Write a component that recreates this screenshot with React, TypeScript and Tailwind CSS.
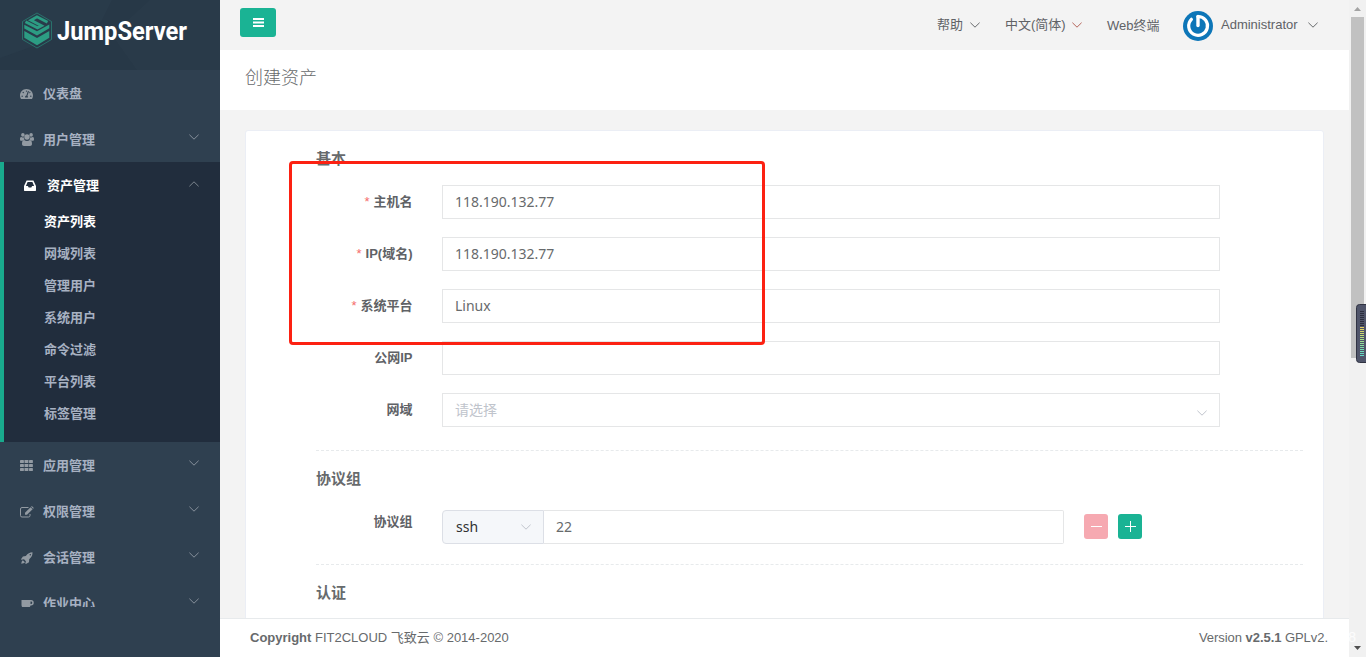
import React from 'react';
import { FaTachometerAlt } from 'react-icons/fa';

interface ChevronProps {
  className?: string;
  up?: boolean;
}

const Chevron: React.FC<ChevronProps> = ({ className = '', up = false }) => (
  <svg className={`h-[6px] w-[10px] shrink-0 ${className}`} viewBox="0 0 10 6" fill="none" stroke="currentColor">
    <path d={up ? 'M0.4 5.3L5 0.8L9.6 5.3' : 'M0.4 0.7L5 5.2L9.6 0.7'} />
  </svg>
);

const UsersIcon: React.FC = () => (
  <svg className="h-[13px] w-[14px]" viewBox="0 0 14 13" fill="currentColor">
    <circle cx="2.900" cy="1.900" r="1.800" />
    <circle cx="11.100" cy="1.900" r="1.800" />
    <circle cx="7" cy="4" r="2.700" />
    <path d="M0 6.200C0 4.800.4 4 1.100 4c.8.4 2 .6 2.700.2 0 1 .2 1.900.8 2.600-.8 0-1.500.3-2 .9H1.300C.5 7.700 0 7.200 0 6.200zM14 6.200C14 4.800 13.600 4 12.900 4c-.8.4-2 .6-2.700.2 0 1-.2 1.900-.8 2.600.8 0 1.500.3 2 .9h1.300c.8 0 1.300-.5 1.300-1.500z" />
    <path d="M2 11c0-2.400.7-3.900 2.200-3.900 1.600 1.200 4 1.200 5.600 0C11.300 7.100 12 8.600 12 11c0 1.200-.8 2-2 2H4c-1.200 0-2-.8-2-2z" />
  </svg>
);

const InboxIcon: React.FC = () => (
  <svg className="h-[11px] w-[12px]" viewBox="0 0 12 11" fill="currentColor" fillRule="evenodd">
    <path d="M2.6 0.5h6.8L12 6v4.3a.6.6 0 0 1-.6.6H.6a.6.6 0 0 1-.6-.6V6zM3.6 2L1.900 6h2l.8 1.600h2.600L8.100 6h2L8.400 2z" />
  </svg>
);

const GridIcon: React.FC = () => (
  <svg className="h-[11px] w-[13px]" viewBox="0 0 13 11" fill="currentColor">
    {[0, 4, 8].map((y) =>
      [0, 4.5, 9].map((x) => <rect key={`${x}-${y}`} x={x} y={y} width="3.9" height="3" rx="0.4" />)
    )}
  </svg>
);

const EditIcon: React.FC = () => (
  <svg className="h-[12px] w-[14px]" viewBox="0 0 14 12" fill="none" stroke="currentColor">
    <path d="M8.500 1.500H2A1.500 1.500 0 0 0 .5 3v6.500A1.500 1.500 0 0 0 2 11h6.500A1.500 1.500 0 0 0 10 9.500V8" />
    <path d="M5 6.800L10.600 1.200L12.600 3.200L7 8.800H5z" fill="currentColor" stroke="none" />
    <path d="M11.100.7l.7-.7 2 2-.7.7z" fill="currentColor" stroke="none" />
  </svg>
);

const RocketIcon: React.FC = () => (
  <svg className="h-[12px] w-[13px]" viewBox="0 0 13 12" fill="currentColor" fillRule="evenodd">
    <path d="M12.500.2C12.600 3 11.800 4.800 9.200 7.200L9 10.200L5.900 12L5.300 11.600L5.900 9.200L4 7.200L1.400 7.800L1 7.300L2.900 4.400L5.800 4.100C7.800 1.300 9.800.2 12.500.2zM10.300 1.900a.8.8 0 1 0 0 1.600.8.8 0 0 0 0-1.600z" />
    <path d="M2.800 8.200L4.900 10.300C4.100 11.400 2.800 11.600 1.300 11.700C1.400 10.200 1.700 8.900 2.800 8.200z" />
  </svg>
);

const CoffeeIcon: React.FC = () => (
  <svg className="ml-px h-[8px] w-[13px]" viewBox="0 0 13 8" fill="currentColor" fillRule="evenodd">
    <path d="M.5 0H10a2.700 2.700 0 0 1 0 5.500H9.500A2.300 2.300 0 0 1 7.500 7.500H3A2.500 2.500 0 0 1 .5 5zM9.500 1.500V4H10a1.250 1.250 0 0 0 0-2.500z" />
  </svg>
);

const Logo: React.FC = () => (
  <svg className="h-[70px] w-[220px]" viewBox="0 0 220 70">
    <rect width="220" height="70" fill="#273847" />
    <path d="M0 0H112L101 22L0 58z" fill="#2b3d4d" opacity="0.6" />
    <path d="M112 35L137 70H220V0H150z" fill="#2b3c4b" opacity="0.6" />
    <path d="M37 13L51.500 21.500V39.500L37 48L22.500 39.500V21.500z" fill="none" stroke="#2a7f74" strokeWidth="0.8" />
    <path
      d="M47.500 22.300L37 16.800L31 20.200L41.500 25.700L37.500 27.900L25.500 21.800"
      fill="none"
      stroke="#2c9c83"
      strokeWidth="2.900"
    />
    <g fill="#2c9c83">
      <path d="M24.300 24.700L37 31.300L49.300 24.500V28.300L37 35.600L24.300 28.500z" />
      <path d="M24.300 31L37 38L49.300 31V37.800L37 45.300L24.300 37.800z" />
    </g>
    <text
      x="57"
      y="40"
      textLength="130"
      lengthAdjust="spacingAndGlyphs"
      className="fill-white font-['Roboto',sans-serif] text-[26px] font-bold"
    >
      JumpServer
    </text>
  </svg>
);

interface MenuItemProps {
  icon: React.ReactNode;
  label: string;
  arrow?: boolean;
}

const MenuItem: React.FC<MenuItemProps> = ({ icon, label, arrow = true }) => (
  <a href="#" className="flex h-[46px] shrink-0 items-center pr-[21px] pl-5 text-[13px] font-semibold text-[#a7b1c2]">
    <span className="flex w-[23px] items-center pt-px text-[#929aa2]">{icon}</span>
    <span className="flex-1 pt-px">{label}</span>
    {arrow && <Chevron className="mb-[4px] text-[#87909b]" />}
  </a>
);

const assetMenu = ['资产列表', '网域列表', '管理用户', '系统用户', '命令过滤', '平台列表', '标签管理'];

const Sidebar: React.FC = () => (
  <aside className="flex w-[220px] shrink-0 flex-col bg-[#2f4050]">
    <Logo />
    <nav className="flex h-[537px] flex-col overflow-hidden">
      <MenuItem icon={<FaTachometerAlt className="h-[14px] w-[13px]" />} label="仪表盘" arrow={false} />
      <MenuItem icon={<UsersIcon />} label="用户管理" />
      <div className="h-[280px] shrink-0 border-l-4 border-[#19aa8d] bg-[#212d3d]">
        <a href="#" className="flex h-[43px] items-center pt-[3px] pr-[21px] pl-5 text-[13px] font-semibold text-white">
          <span className="flex w-[23px] items-center">
            <InboxIcon />
          </span>
          <span className="flex-1 pt-px">资产管理</span>
          <Chevron up className="mb-[3px] text-[#7c858e]" />
        </a>
        <ul className="pl-10 text-[13px] font-semibold">
          {assetMenu.map((name, i) => (
            <li key={name} className={`flex h-8 items-center pt-px ${i === 0 ? 'text-white' : 'text-[#a7b1c2]'}`}>
              {name}
            </li>
          ))}
        </ul>
      </div>
      <MenuItem icon={<GridIcon />} label="应用管理" />
      <MenuItem icon={<EditIcon />} label="权限管理" />
      <MenuItem icon={<RocketIcon />} label="会话管理" />
      <MenuItem icon={<CoffeeIcon />} label="作业中心" />
    </nav>
  </aside>
);

const TopBar: React.FC = () => (
  <header className="flex h-[50px] shrink-0 items-center justify-between bg-[#f3f3f3] pr-[31px] pl-5 text-[13px] text-[#606266]">
    <button className="mb-[5px] flex h-[29px] w-9 items-center justify-center rounded-[3px] bg-[#1ab394]">
      <svg className="h-[9px] w-[11px]" viewBox="0 0 11 9" fill="white">
        <path d="M0 0h11v2H0zM0 3.500h11v2H0zM0 7h11v2H0z" />
      </svg>
    </button>
    <div className="flex items-center">
      <span className="flex w-[68px] items-center gap-[7px]">
        帮助
        <Chevron className="mb-px text-[#676a6c]" />
      </span>
      <span className="flex w-[102px] items-center gap-[6px] whitespace-nowrap">
        中文(简体)
        <Chevron className="mb-px text-[#b5655b]" />
      </span>
      <span className="w-[76px] pt-px">Web终端</span>
      <svg className="mt-[2px] h-[30px] w-[30px]" viewBox="0 0 30 30">
        <circle cx="15" cy="15" r="15" fill="#0d76b8" />
        <path d="M15 5.500a9.400 9.400 0 1 1-6.600 2.800" fill="none" stroke="#fff" strokeWidth="3.200" strokeLinecap="round" />
        <path d="M15 5.500V14.500" stroke="#fff" strokeWidth="3.400" strokeLinecap="round" />
      </svg>
      <span className="ml-2 w-[87px]">Administrator</span>
      <Chevron className="mb-px text-[#676a6c]" />
    </div>
  </header>
);

interface FieldProps {
  label: string;
  required?: boolean;
  labelHeight?: string;
  className?: string;
  children: React.ReactNode;
}

const Field: React.FC<FieldProps> = ({ label, required = false, labelHeight = 'h-[33px]', className = '', children }) => (
  <div className={`flex h-[34px] ${className}`}>
    <label
      className={`flex w-[96.5px] shrink-0 items-center justify-end text-[13px] font-semibold whitespace-nowrap text-[#606266] ${labelHeight}`}
    >
      {required && <span className="mr-1 font-normal text-[#f56c6c]">*</span>}
      {label}
    </label>
    <div className="ml-[29.5px] flex flex-1">{children}</div>
  </div>
);

const TextBox: React.FC<{ value?: string }> = ({ value = '' }) => (
  <div className="flex h-[34px] w-[778px] items-center border border-[#e5e6e7] px-3 font-['Noto_Sans','Noto_Sans_CJK_SC',sans-serif] text-sm text-[#676a6c]">
    {value}
  </div>
);

const sectionTitle = 'h-5 text-[15px] leading-5 font-semibold text-[#676a6c]';

const AssetForm: React.FC = () => (
  <div className="mx-[25px] mt-5 h-[520px] rounded-[3px] border border-[#ebeef5] bg-white pt-[18px] pr-5 pl-[70px]">
    <h3 className={sectionTitle}>基本</h3>
    <div className="mt-4 flex flex-col gap-[18px]">
      <Field label="主机名" required>
        <TextBox value="118.190.132.77" />
      </Field>
      <Field label="IP(域名)" required>
        <TextBox value="118.190.132.77" />
      </Field>
      <Field label="系统平台" required>
        <TextBox value="Linux" />
      </Field>
      <Field label="公网IP">
        <TextBox />
      </Field>
      <Field label="网域">
        <div className="flex h-[34px] w-[778px] items-center justify-between border border-[#e5e6e7] pr-3 pl-3 text-sm text-[#c0c4cc]">
          请选择
          <Chevron className="mt-[6px]" />
        </div>
      </Field>
    </div>
    <hr className="mt-[23px] border-0 border-t border-dashed border-[#e7eaec]" />
    <h3 className={`mt-[18px] ${sectionTitle}`}>协议组</h3>
    <Field label="协议组" className="mt-[21px]" labelHeight="h-[24px]">
      <div className="flex h-[34px] w-[622px] rounded-[4px] font-['Noto_Sans',sans-serif] text-sm text-[#676a6c]">
        <div className="flex w-[102px] items-center justify-between rounded-l-[4px] border border-[#dcdfe6] bg-[#f5f7fa] pr-3 pl-[13px] text-[#303133]">
          ssh
          <Chevron className="mb-px text-[#c0c4cc]" />
        </div>
        <div className="flex flex-1 items-center rounded-r-[2px] border border-l-0 border-[#e5e6e7] px-3">22</div>
      </div>
      <div className="ml-5 flex items-center gap-[10px] pb-px text-white">
        <button className="flex h-[25px] w-6 items-center justify-center rounded-[3px] bg-[#f6a9b1]">
          <svg className="h-[11px] w-[11px]" viewBox="0 0 11 11" stroke="currentColor">
            <path d="M0 5.500h11" />
          </svg>
        </button>
        <button className="flex h-[25px] w-6 items-center justify-center rounded-[3px] bg-[#1ab394]">
          <svg className="h-[11px] w-[11px]" viewBox="0 0 11 11" stroke="currentColor">
            <path d="M0 5.500h11M5.500 0v11" />
          </svg>
        </button>
      </div>
    </Field>
    <hr className="mt-5 border-0 border-t border-dashed border-[#e7eaec]" />
    <h3 className={`mt-[18px] ${sectionTitle}`}>认证</h3>
  </div>
);

const Scrollbar: React.FC = () => (
  <div className="flex w-[17px] shrink-0 flex-col items-center bg-[#f1f1f1]">
    <svg className="h-[17px] w-[17px] shrink-0" viewBox="0 0 17 17" fill="#a3a3a3">
      <path d="M5 11h7L8.500 7z" />
    </svg>
    <div className="h-[341px] w-[13px] bg-[#c1c1c1]" />
    <svg className="mt-auto h-[17px] w-[17px] shrink-0" viewBox="0 0 17 17" fill="#505050">
      <path d="M5 6h7L8.500 10z" />
    </svg>
  </div>
);

const meterColors = [
  '#2b2e3d', '#2b2e3d', '#2b2e3d', '#2b2e3d', '#2b2e3d', '#2b2e3d', '#2b2e3d', '#2b2e3d',
  '#e3cf60', '#dbd365', '#d3d66a', '#cbda70', '#bfdc78', '#b4de80', '#a8df88', '#9ddf90',
  '#92df98', '#87dea0', '#7ddda8', '#74dcb0', '#6cdab8', '#66d8bf', '#62d6c5',
];

const SideMeter: React.FC = () => (
  <svg className="absolute top-[304px] right-0 h-[59px] w-[10px]" viewBox="0 0 10 59">
    <rect x="0.500" y="0.500" width="14" height="58" rx="3" fill="#50556a" stroke="#303342" />
    {meterColors.map((color, i) => (
      <rect key={i} x="4" y={7 + i * 2} width="4" height="1" fill={color} />
    ))}
  </svg>
);

const App: React.FC = () => {
  return (
    <div className="relative flex h-[657px] w-[1366px] overflow-hidden bg-[#f3f3f3] font-['Liberation_Sans','Noto_Sans_CJK_SC',sans-serif]">
      <Sidebar />
      <main className="flex min-w-0 flex-1 flex-col">
        <TopBar />
        <div className="flex h-[60px] shrink-0 items-center bg-white px-[25px] pb-[3px] text-[18px] font-light text-[#676a6c]">
          创建资产
        </div>
        <div className="min-h-0 flex-1 overflow-hidden">
          <AssetForm />
        </div>
        <footer className="flex h-[39px] shrink-0 items-center justify-between border-t border-[#e7eaec] bg-white pr-[21px] pl-[30px] text-[13px] text-[#676a6c]">
          <div>
            <strong>Copyright</strong> FIT2CLOUD 飞致云 © 2014-2020
          </div>
          <div className="tracking-[-0.05px]">
            Version <strong>v2.5.1</strong> GPLv2.
          </div>
        </footer>
      </main>
      <Scrollbar />
      <span className="absolute right-[10px] bottom-[11px] text-[14px] leading-[18px] text-white/80">8</span>
      <div className="absolute top-[161px] left-[289px] h-[184px] w-[476px] rounded-[4px] border-3 border-[#fc2112]" />
      <SideMeter />
    </div>
  );
};

export default App;
